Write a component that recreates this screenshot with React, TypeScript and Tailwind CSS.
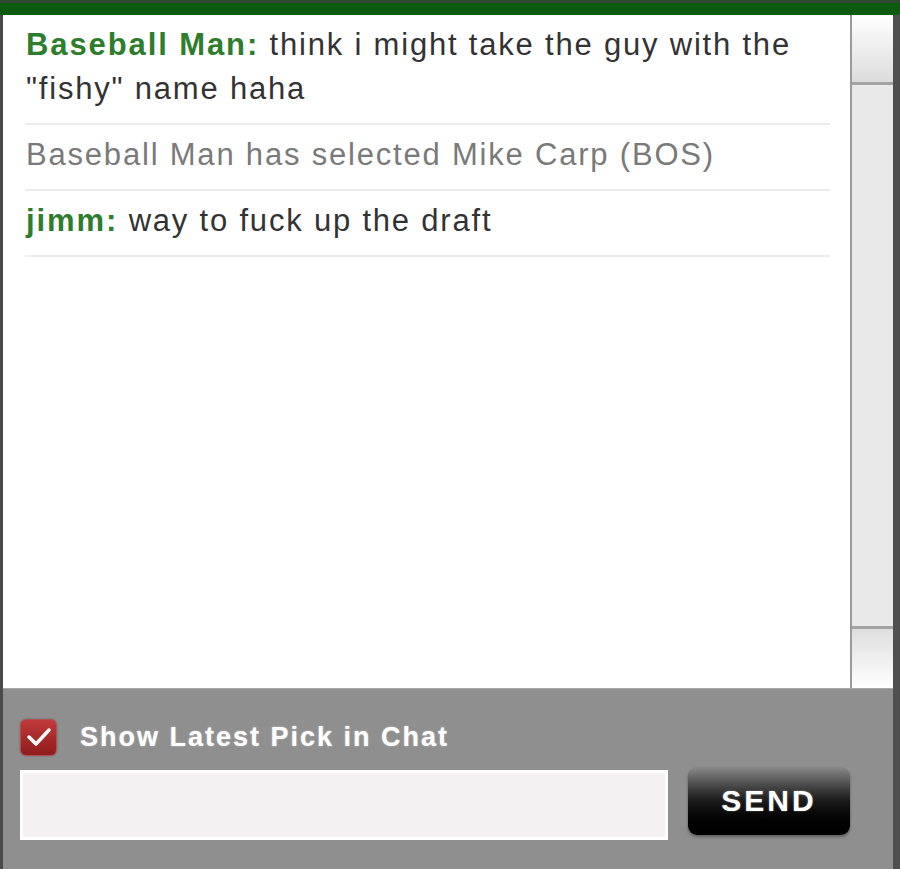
import { useState } from "react";

const messages = [
  { name: "Baseball Man", text: 'think i might take the guy with the "fishy" name haha' },
  { system: "Baseball Man has selected Mike Carp (BOS)" },
  { name: "jimm", text: "way to fuck up the draft" },
];

const Scrollbar = () => (
  <div className="w-[43px] flex flex-col border-l-2 border-[#9b9b9b] bg-[#e8e8e8]">
    <div className="h-[70px] bg-gradient-to-b from-white to-[#dcdcdc] border-b-[3px] border-[#a3a3a3]" />
    <div className="flex-1 bg-[#e9e9e9]" />
    <div className="h-[62px] bg-gradient-to-b from-[#dedede] to-white border-t-[3px] border-[#a3a3a3]" />
  </div>
);

export default function App() {
  const [checked, setChecked] = useState(true);

  return (
    <div className="w-[900px] h-[869px] flex flex-col bg-white" style={{ fontFamily: '"Liberation Sans", Arial, sans-serif' }}>
      <div className="h-[15px] bg-[#0b5a0e] border-t-[3px] border-[#2f4a30]" />
      <div className="flex-1 flex">
        <div className="w-[3px] bg-[#4a4a4a]" />

        <div className="flex-1 flex flex-col">
          <div className="flex-1 flex">
            <div className="flex-1 pl-[22px] pr-[20px]">
              {messages.map((m, i) => (
                <div key={i} className="pt-[8px] pb-[12px] pl-[1px] border-b-2 border-[#ececec] text-[31px] leading-[44px] tracking-[1.8px]">
                  {m.system
                    ? <span className="text-[#7a7a7a]">{m.system}</span>
                    : <>
                      <span className="font-bold text-[#2d7d2d] tracking-[1.9px]">{m.name}:</span>{" "}
                      <span className="text-[#333333]">{m.text}</span>
                    </>}
                </div>
              ))}
            </div>
            <Scrollbar />
          </div>

          <div className="h-[181px] bg-[#8f8f8f] border-t border-[#a8a8a8] pl-[17px] pr-[43px] pt-[28px]">
            <label className="flex items-center gap-[23px] cursor-pointer">
              <button
                onClick={() => setChecked(!checked)}
                className="w-[37px] h-[37px] rounded-[6px] bg-gradient-to-b from-[#c23a3a] to-[#8e1c1c] border border-[#b05050] flex items-center justify-center shadow-[0_0_2px_rgba(0,0,0,0.3)]"
              >
                {checked && (
                  <svg width="26" height="22" viewBox="0 0 26 22">
                    <path d="M3 11 L10 18 L23 4" fill="none" stroke="white" strokeWidth="3.5" strokeLinecap="round" strokeLinejoin="round" />
                  </svg>
                )}
              </button>
              <span className="text-white font-bold text-[27px] tracking-[2px] [text-shadow:0_0_2px_rgba(255,255,255,0.5)]">Show Latest Pick in Chat</span>
            </label>

            <div className="flex items-start mt-[9px] gap-[20px]">
              <input className="w-[648px] h-[70px] mt-[3px] bg-[#f3f1f2] border-[3px] border-white outline-none px-3 text-[26px]" />
              <button className="w-[162px] h-[68px] rounded-[9px] bg-gradient-to-b from-[#8a8a8a] via-[#1a1a1a] to-black shadow-[0_2px_3px_rgba(0,0,0,0.35)] text-white font-bold text-[30px] tracking-[3px] [text-shadow:0_0_2px_rgba(255,255,255,0.4)]">
                SEND
              </button>
            </div>
          </div>
        </div>

        <div className="w-[7px] bg-[#4f4f4f]" />
      </div>
    </div>
  );
}
